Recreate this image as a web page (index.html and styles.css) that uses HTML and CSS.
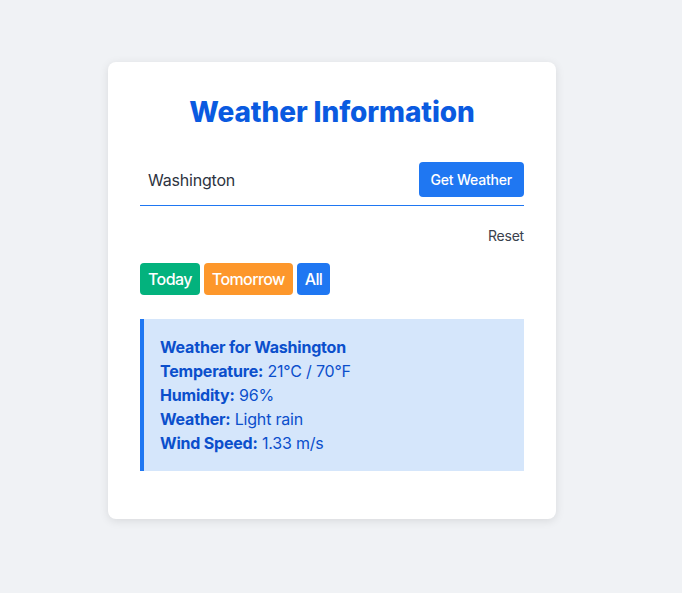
FILE: index.html
```html
<!DOCTYPE html>
<html>
<head>
<meta charset="utf-8">
<link rel="stylesheet" href="styles.css">
</head>
<body>
<div class="page">
  <div class="card">
    <h1 class="title">Weather Information</h1>
    <div class="search">
      <span class="city">Washington</span>
      <button class="btn-get">Get Weather</button>
    </div>
    <div class="reset-row"><span class="reset">Reset</span></div>
    <div class="tabs">
      <span class="tab tab-today">Today</span>
      <span class="tab tab-tomorrow">Tomorrow</span>
      <span class="tab tab-all">All</span>
    </div>
    <div class="info">
      <div class="line"><b>Weather for Washington</b></div>
      <div class="line"><b>Temperature:</b> 21°C / 70°F</div>
      <div class="line"><b>Humidity:</b> 96%</div>
      <div class="line"><b>Weather:</b> Light rain</div>
      <div class="line"><b>Wind Speed:</b> 1.33 m/s</div>
    </div>
  </div>
</div>
</body>
</html>
```
FILE: styles.css
```css
* { box-sizing: border-box; }
html, body { margin: 0; padding: 0; }
body {
  background: #f0f2f5;
  font-family: Inter, "Noto Sans", sans-serif;
  letter-spacing: -0.2px;
  width: 682px;
  height: 593px;
}
.page {
  display: flex;
  justify-content: flex-start;
  padding: 62px 0 0 108px;
}
.card {
  width: 448px;
  background: #fff;
  border-radius: 8px;
  box-shadow: 0 2px 10px rgba(0,0,0,0.1);
  padding: 32px 32px 48px;
}
.title {
  margin: 0;
  text-align: center;
  font-size: 28px;
  line-height: 36px;
  font-weight: 800;
  letter-spacing: -0.1px;
  color: #0a5ae0;
}
.search {
  margin-top: 32px;
  display: flex;
  justify-content: space-between;
  align-items: center;
  border-bottom: 1px solid #1f77f2;
  padding: 0 0 8px 8px;
}
.city {
  font-size: 16px;
  color: #2d3340;
}
.btn-get {
  border: none;
  background: #1f77f2;
  color: #fff;
  font-family: inherit;
  font-weight: 500;
  letter-spacing: -0.2px;
  font-size: 14px;
  height: 35px;
  padding: 0 12px;
  border-radius: 4px;
}
.reset-row {
  display: flex;
  justify-content: flex-end;
  margin-top: 20px;
}
.reset {
  font-size: 14px;
  line-height: 20px;
  color: #3a414d;
}
.tabs {
  margin-top: 17px;
  display: flex;
  gap: 4px;
}
.tab {
  color: #fff;
  font-size: 16px;
  font-weight: 500;
  height: 32px;
  line-height: 32px;
  padding: 0 8px;
  border-radius: 4px;
  letter-spacing: -0.6px;
}
.tab-today { background: #03b27d; }
.tab-tomorrow { background: #fd972b; }
.tab-all { background: #1f77f2; }
.info {
  margin-top: 24px;
  background: #d5e6fb;
  border-left: 4px solid #1f77f2;
  padding: 16px 16px;
  color: #0b4fcc;
  font-size: 16px;
  line-height: 24px;
}
.info b { font-weight: 700; }
```
